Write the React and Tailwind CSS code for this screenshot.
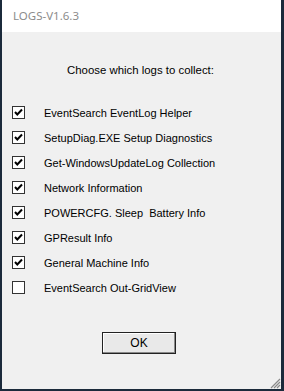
import React from "react";

const logs = [
  { label: "EventSearch EventLog Helper", checked: true },
  { label: "SetupDiag.EXE Setup Diagnostics", checked: true },
  { label: "Get-WindowsUpdateLog Collection", checked: true },
  { label: "Network Information", checked: true },
  { label: "POWERCFG. Sleep  Battery Info", checked: true },
  { label: "GPResult Info", checked: true },
  { label: "General Machine Info", checked: true },
  { label: "EventSearch Out-GridView", checked: false },
];

const CheckBox = ({ checked }) => (
  <div className="w-[13px] h-[13px] bg-white border border-[#333333] flex items-center justify-center shrink-0">
    {checked && (
      <svg width="11" height="11" viewBox="0 0 11 11">
        <path d="M2 5 L4.3 7.5 L9 2.5" fill="none" stroke="#000" strokeWidth="2" />
      </svg>
    )}
  </div>
);

const App = () => {
  return (
    <div className="w-[284px] h-[391px] flex flex-col border-l-2 border-r-[3px] border-b-2 border-[#1b2a3b] font-['Liberation_Sans',Arial,sans-serif] text-[11px] text-black">
      <div className="h-[32px] bg-white flex items-center pl-[11px] shrink-0">
        <span className="font-['Noto_Sans',sans-serif] text-[11.5px] text-[#8c8c8c]">
          LOGS-V1.6.3
        </span>
      </div>
      <div className="flex-1 bg-[#f0f0f0] flex flex-col relative">
        <p className="mt-[31px] text-center text-[11.4px] leading-[14px] pr-[2px]">
          Choose which logs to collect:
        </p>
        <div className="mt-[23px] flex flex-col">
          {logs.map((log) => (
            <div key={log.label} className="h-[25px] flex items-center pl-[10px] gap-[19px]">
              <CheckBox checked={log.checked} />
              <span className="leading-[14px] whitespace-pre">{log.label}</span>
            </div>
          ))}
        </div>
        <div className="mt-[32px] pl-[100px]">
          <button className="w-[74px] h-[22px] bg-[#e9e9e9] border border-[#222] shadow-[inset_-1px_-1px_0_#8a8a8a,inset_1px_1px_0_#ffffff] text-[12px] leading-[14px]">
            OK
          </button>
        </div>
        <svg className="absolute right-0 bottom-0" width="12" height="12" viewBox="0 0 12 12">
          <path d="M11 2 L2 11 M11 5 L5 11 M11 8 L8 11" stroke="#8a8a8a" strokeWidth="1.2" />
        </svg>
      </div>
    </div>
  );
};

export default App;
